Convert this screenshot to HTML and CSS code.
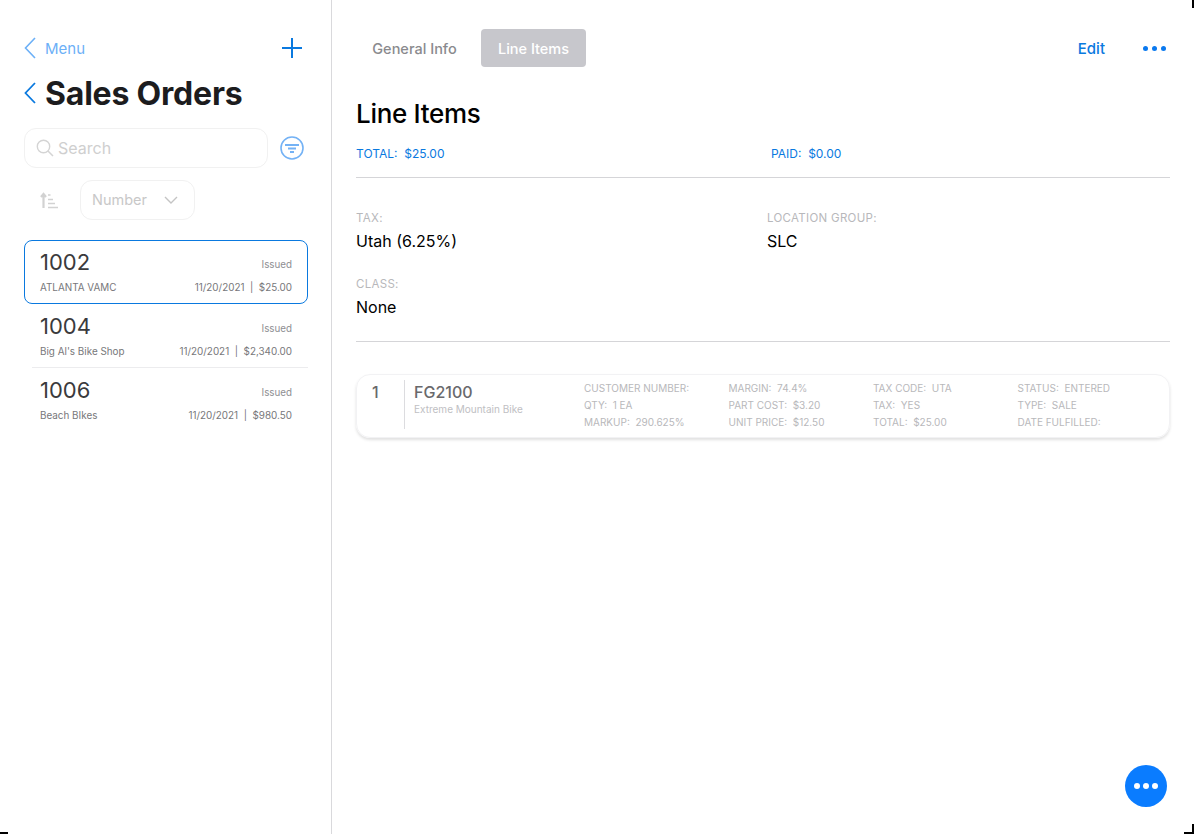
FILE: index.html
```html
<!DOCTYPE html>
<html lang="en">
<head>
  <meta charset="UTF-8" />
  <title>Sales Orders</title>
  <link rel="stylesheet" href="styles.css">
</head>
<body>
  <div class="app">
    <div class="sidebar">
      <div class="nav-row">
        <svg class="chev" width="12" height="22" viewBox="0 0 12 22"><path d="M11 1 1.5 11 11 21" fill="none" stroke="#6cb0f7" stroke-width="1.6"/></svg>
        <span class="menu-link">Menu</span>
        <svg class="plus" width="20" height="20" viewBox="0 0 20 20"><path d="M10 0v20M0 10h20" stroke="#0a79df" stroke-width="2"/></svg>
      </div>
      <div class="title-row">
        <svg width="12" height="22" viewBox="0 0 12 22"><path d="M11 1 1.5 11 11 21" fill="none" stroke="#0a79df" stroke-width="1.8"/></svg>
        <h1>Sales Orders</h1>
      </div>
      <div class="search-row">
        <div class="search-box">
          <svg width="18" height="18" viewBox="0 0 18 18"><circle cx="7.5" cy="7.5" r="6.2" fill="none" stroke="#d4d4d4" stroke-width="1.4"/><path d="m12 12 5 5" stroke="#d4d4d4" stroke-width="1.5"/></svg>
          <span>Search</span>
        </div>
        <svg class="filter" width="24" height="24" viewBox="0 0 24 24"><circle cx="12" cy="12" r="11" fill="none" stroke="#74b2f5" stroke-width="1.6"/><path d="M5 9h14M8 12.500h8M10 16h4" stroke="#74b2f5" stroke-width="1.8"/></svg>
      </div>
      <div class="sort-row">
        <svg class="sort-icon" width="18" height="18" viewBox="0 0 18 18"><path d="M3.500 17V3M1 6l2.500-3L6 6" fill="none" stroke="#d2d2d2" stroke-width="2.2"/><path d="M8 4h2.500M8 8.500h5M8 12.500h7M8 16.500h10" stroke="#d2d2d2" stroke-width="1.6"/></svg>
        <div class="sort-select">
          <span>Number</span>
          <svg width="14" height="8" viewBox="0 0 14 8"><path d="m1 1 6 6 6-6" fill="none" stroke="#c4c4c4" stroke-width="1.4"/></svg>
        </div>
      </div>
      <div class="order-list">
        <div class="order selected">
          <div class="order-top"><span class="order-num">1002</span><span class="order-status">Issued</span></div>
          <div class="order-bottom"><span>ATLANTA VAMC</span><span>11/20/2021&nbsp; |&nbsp; $25.00</span></div>
        </div>
        <div class="order ruled">
          <div class="order-top"><span class="order-num">1004</span><span class="order-status">Issued</span></div>
          <div class="order-bottom"><span>Big Al's Bike Shop</span><span>11/20/2021&nbsp; |&nbsp; $2,340.00</span></div>
        </div>
        <div class="order">
          <div class="order-top"><span class="order-num">1006</span><span class="order-status">Issued</span></div>
          <div class="order-bottom"><span>Beach BIkes</span><span>11/20/2021&nbsp; |&nbsp; $980.50</span></div>
        </div>
      </div>
    </div>

    <div class="main">
      <div class="toolbar">
        <div class="tabs">
          <span class="tab">General Info</span>
          <span class="tab active">Line Items</span>
        </div>
        <div class="actions">
          <span class="edit">Edit</span>
          <div class="dots"><i></i><i></i><i></i></div>
        </div>
      </div>
      <h2>Line Items</h2>
      <div class="totals">
        <span class="total-cell">TOTAL:&nbsp; $25.00</span>
        <span class="paid">PAID:&nbsp; $0.00</span>
      </div>
      <div class="fields">
        <div class="field">
          <label>TAX:</label>
          <p>Utah (6.25%)</p>
        </div>
        <div class="field">
          <label>LOCATION GROUP:</label>
          <p>SLC</p>
        </div>
        <div class="field">
          <label>CLASS:</label>
          <p>None</p>
        </div>
      </div>
      <div class="line-card">
        <div class="line-no">1</div>
        <div class="line-name">
          <div class="sku">FG2100</div>
          <div class="desc">Extreme Mountain Bike</div>
        </div>
        <div class="line-cols">
          <div class="line-col">
            <span>CUSTOMER NUMBER:</span>
            <span>QTY:&nbsp; 1 EA</span>
            <span>MARKUP:&nbsp; 290.625%</span>
          </div>
          <div class="line-col">
            <span>MARGIN:&nbsp; 74.4%</span>
            <span>PART COST:&nbsp; $3.20</span>
            <span>UNIT PRICE:&nbsp; $12.50</span>
          </div>
          <div class="line-col">
            <span>TAX CODE:&nbsp; UTA</span>
            <span>TAX:&nbsp; YES</span>
            <span>TOTAL:&nbsp; $25.00</span>
          </div>
          <div class="line-col">
            <span>STATUS:&nbsp; ENTERED</span>
            <span>TYPE:&nbsp; SALE</span>
            <span>DATE FULFILLED:</span>
          </div>
        </div>
      </div>
    </div>
  </div>

  <div class="fab"><i></i><i></i><i></i></div>

  <!-- crop marks -->
  <span class="mark tr"></span>
  <span class="mark bl"></span>
  <span class="mark br"></span>
</body>
</html>
```

FILE: styles.css
```css
* { box-sizing: border-box; }
html, body { height: 100%; }
body {
  margin: 0;
  overflow: hidden;
  background: #fff;
  font-family: Inter, "Liberation Sans", sans-serif;
  color: #000;
}

.app {
  display: flex;
  height: 834px;
}

/* sidebar */
.sidebar {
  width: 332px;
  flex-shrink: 0;
  border-right: 1px solid #d9d9dc;
  padding: 37px 23px 0 24px;
}
.nav-row {
  display: flex;
  align-items: center;
  height: 22px;
}
.menu-link {
  margin-left: 9px;
  font-size: 15px;
  color: #6cb0f7;
}
.plus { margin-left: auto; margin-right: 6px; }

.title-row {
  display: flex;
  align-items: center;
  margin-top: 12px;
  height: 44px;
}
.title-row h1 {
  margin: 0 0 0 9px;
  font-size: 32px;
  font-weight: 700;
  letter-spacing: -0.2px;
  color: #1c1c1e;
}

.search-row {
  display: flex;
  align-items: center;
  margin-top: 13px;
}
.search-box {
  width: 244px;
  height: 40px;
  border: 1px solid #f1f1f1;
  border-radius: 12px;
  display: flex;
  align-items: center;
  padding-left: 11px;
  font-size: 16px;
  color: #cfcfcf;
}
.search-box span { margin-left: 4px; }
.filter { margin-left: 12px; }

.sort-row {
  display: flex;
  align-items: center;
  margin-top: 12px;
}
.sort-icon { margin-left: 16px; }
.sort-select {
  margin-left: 22px;
  width: 115px;
  height: 40px;
  border: 1px solid #f1f1f1;
  border-radius: 12px;
  display: flex;
  align-items: center;
  padding: 0 16px 2px 11px;
  justify-content: space-between;
  font-size: 14.500px;
  color: #c8c8c8;
}
.sort-select svg { margin-top: 2px; }

.order-list { margin-top: 20px; }
.order {
  height: 64px;
  padding: 8px 16px 0 16px;
  position: relative;
}
.order.selected {
  border: 1px solid #0a79df;
  border-radius: 8px;
  padding: 7px 15px 0 15px;
  width: 284px;
}
.order.ruled::after {
  content: "";
  position: absolute;
  left: 8px;
  right: 0;
  bottom: 0;
  height: 1px;
  background: #ececee;
}
.order-top, .order-bottom {
  display: flex;
  justify-content: space-between;
}
.order-top { align-items: center; height: 28px; }
.order-bottom {
  margin-top: 5px;
  font-size: 9.900px;
  color: #77777a;
}
.order-num { font-size: 22px; color: #3a3a3c; }
.order-status {
  font-size: 9.800px;
  color: #8e8e92;
  margin-top: 4px;
}

/* main */
.main {
  flex: 1;
  min-width: 0;
  padding: 29px 24px 0;
}
.toolbar {
  display: flex;
  justify-content: space-between;
  align-items: center;
  height: 38px;
}
.tabs { display: flex; gap: 8px; }
.tab {
  width: 117px;
  height: 38px;
  display: flex;
  align-items: center;
  justify-content: center;
  font-size: 14.500px;
  font-weight: 500;
  color: #8a8a8e;
}
.tab.active {
  width: 105px;
  background: #c7c7cc;
  color: #fff;
  border-radius: 4px;
}
.actions { display: flex; align-items: center; }
.edit {
  font-size: 15px;
  font-weight: 500;
  color: #0a79df;
}
.dots {
  display: flex;
  gap: 4px;
  margin-left: 38px;
  margin-right: 4px;
}
.dots i {
  width: 5px;
  height: 5px;
  border-radius: 50%;
  background: #0a79ef;
}

h2 {
  margin: 29px 0 0;
  font-size: 26px;
  line-height: 36px;
  font-weight: 500;
  letter-spacing: -0.3px;
}
.totals {
  display: flex;
  margin-top: 15px;
  padding-bottom: 16px;
  border-bottom: 1px solid #d5d5d8;
  font-size: 12px;
  line-height: 14px;
  color: #0a79df;
}
.total-cell { width: 415px; }

.fields {
  display: grid;
  grid-template-columns: 411px 1fr;
  row-gap: 25px;
  padding: 33px 0 23px;
  border-bottom: 1px solid #d5d5d8;
}
.field label {
  display: block;
  font-size: 11.500px;
  line-height: 14px;
  letter-spacing: 0.3px;
  color: #b8b8bb;
}
.field p {
  margin: 5px 0 0;
  font-size: 16px;
  line-height: 22px;
}

.line-card {
  display: flex;
  margin-top: 32px;
  height: 64px;
  border: 1px solid #f2f2f4;
  border-radius: 14px;
  box-shadow: 0 2px 3px rgba(0,0,0,0.12);
  padding: 5px 0 0 15px;
}
.line-no {
  width: 33px;
  height: 49px;
  border-right: 1px solid #dcdcdf;
  font-size: 16px;
  font-weight: 500;
  line-height: 24px;
  color: #69696c;
}
.line-name { width: 179px; padding-left: 9px; }
.sku {
  font-size: 16px;
  font-weight: 500;
  line-height: 24px;
  color: #69696c;
}
.desc {
  font-size: 10px;
  line-height: 11px;
  color: #c0c0c3;
}
.line-cols { display: flex; }
.line-col {
  width: 144.500px;
  display: flex;
  flex-direction: column;
  font-size: 10px;
  line-height: 17px;
  color: #b8b8bb;
}

.fab {
  position: absolute;
  left: 1125px;
  top: 765px;
  width: 42px;
  height: 42px;
  border-radius: 50%;
  background: #0a7cff;
  display: flex;
  align-items: center;
  justify-content: center;
  gap: 3px;
}
.fab i {
  width: 6px;
  height: 6px;
  border-radius: 50%;
  background: #fff;
}

.mark {
  position: absolute;
  background: #000;
}
.mark.tr { top: 0; right: 0; width: 2px; height: 8px; }
.mark.bl { bottom: 0; left: 0; width: 8px; height: 2px; }
.mark.br {
  bottom: 0;
  right: 0;
  width: 10px;
  height: 10px;
  background: none;
  border-right: 2px solid #000;
  border-bottom: 2px solid #000;
}
```
